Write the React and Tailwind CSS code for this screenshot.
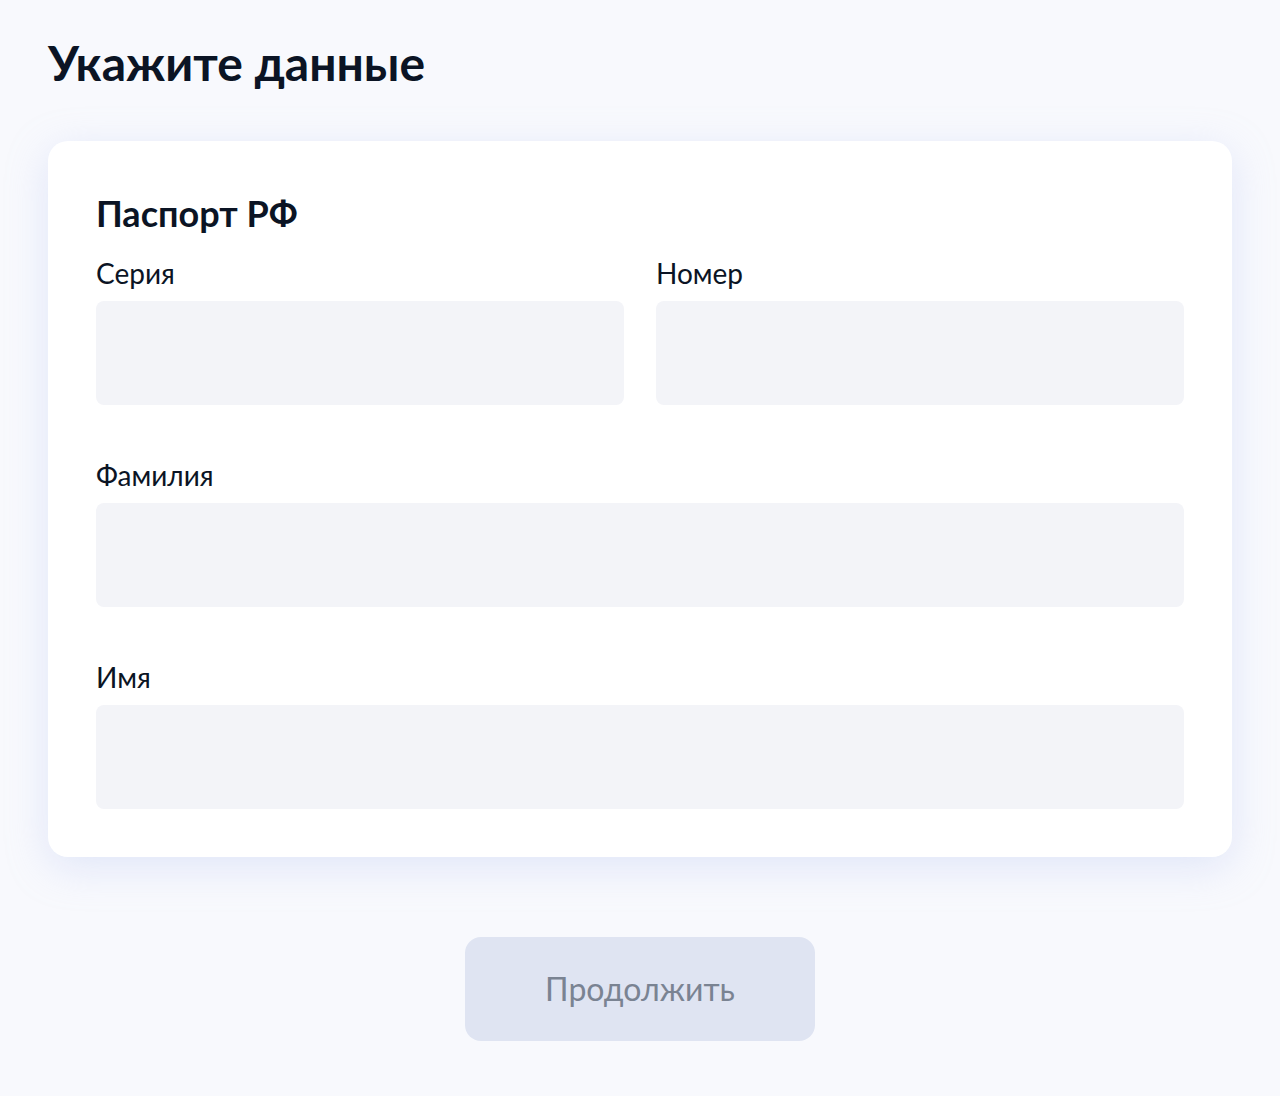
import React from 'react'

function Field({ label, className = '' }) {
  return (
    <div className={className}>
      <label className="mb-3 block text-[28px] leading-[32px] text-[#0b1424]">
        {label}
      </label>
      <div className="h-[104px] rounded-lg bg-[#f3f4f8]" />
    </div>
  )
}

export default function App() {
  return (
    <div
      className="min-h-[1096px] bg-[#f8f9fd] px-12 pt-[36px] pb-14"
      style={{ fontFamily: 'Lato, "Noto Sans", sans-serif' }}
    >
      <h1 className="text-[48px] font-bold leading-[53px] text-[#0b1424]">
        Укажите данные
      </h1>
      <div className="mt-[52px] rounded-[20px] bg-white p-12 shadow-[0_10px_40px_rgba(180,195,240,0.35)]">
        <h2 className="text-[36px] font-bold leading-[48px] text-[#0b1424]">
          Паспорт РФ
        </h2>
        <div className="mt-[20px] grid grid-cols-2 gap-8">
          <Field label="Серия" />
          <Field label="Номер" />
        </div>
        <Field label="Фамилия" className="mt-[54px]" />
        <Field label="Имя" className="mt-[54px]" />
      </div>
      <div className="mt-20 flex justify-center">
        <button className="h-[104px] w-[350px] rounded-2xl bg-[#dfe4f2] text-[32px] text-[#7a8392]">
          Продолжить
        </button>
      </div>
    </div>
  )
}
